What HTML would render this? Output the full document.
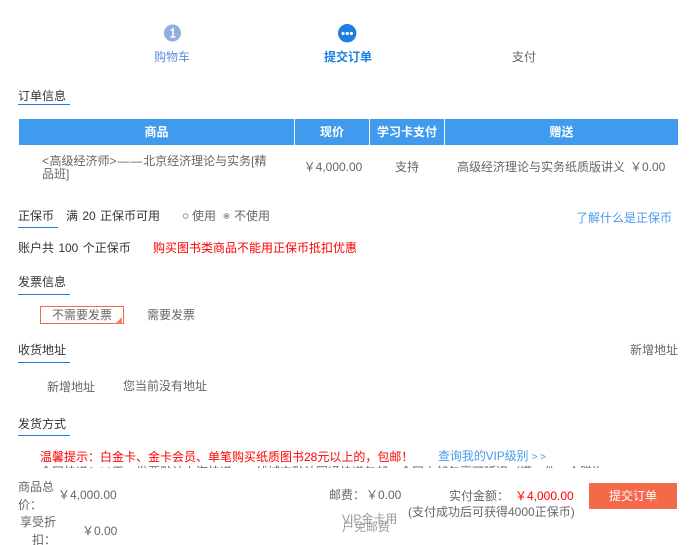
<!DOCTYPE html>
<html lang="zh-CN">
<head>
<meta charset="utf-8">
<title>提交订单</title>
<style>
html,body{margin:0;padding:0;background:#fff}
#p{position:relative;width:696px;height:545px;overflow:hidden;background:#fff;font-family:"Liberation Sans","WenQuanYi Zen Hei","Noto Sans CJK SC",sans-serif;font-size:12px;color:#666}
.t{position:absolute;white-space:nowrap;line-height:16px;height:16px}
.c{text-align:center}
.h{color:#333}
.u{position:absolute;height:1px;background:#1a7fe0}
.th{position:absolute;top:119px;height:26px;line-height:26px;background:#409bef;color:#fff;text-align:center;font-weight:bold;font-size:12px}
</style>
</head>
<body>
<div id="p">
<svg style="position:absolute;left:164px;top:24px" width="18" height="18" viewBox="0 0 18 18"><circle cx="8.5" cy="9" r="8.5" fill="#92aede"/><path d="M6.5 6.5 9 5v7.5M6.5 13h5" stroke="#fff" stroke-width="1.6" fill="none"/></svg>
<svg style="position:absolute;left:338px;top:24px" width="19" height="19" viewBox="0 0 19 19"><circle cx="9.2" cy="9.2" r="9.2" fill="#1a7fe0"/><circle cx="5" cy="9.5" r="1.6" fill="#fff"/><circle cx="9.2" cy="9.5" r="1.6" fill="#fff"/><circle cx="13.4" cy="9.5" r="1.6" fill="#fff"/></svg>
<div class="t c" style="left:132px;width:80px;top:49px;color:#5b8fdc">购物车</div>
<div class="t c" style="left:308px;width:80px;top:49px;color:#1a7fe0;font-weight:bold">提交订单</div>
<div class="t c" style="left:484px;width:80px;top:49px;color:#666">支付</div>

<div class="t h" style="left:18px;top:88px">订单信息</div>
<div class="u" style="left:18px;top:104px;width:52px"></div>

<div class="th" style="left:19px;width:275px">商品</div>
<div class="th" style="left:295px;width:74px">现价</div>
<div class="th" style="left:370px;width:74px">学习卡支付</div>
<div class="th" style="left:445px;width:233px">赠送</div>

<div class="t" style="left:42px;top:153px"><span style="letter-spacing:.5px">&lt;</span>高级经济师<span style="letter-spacing:1px">&gt;</span><span style="letter-spacing:.8px">——</span>北京经济理论与实务[精</div>
<div class="t" style="left:42px;top:166px">品班]</div>
<div class="t c" style="left:295px;width:76px;top:159px">￥4,000.00</div>
<div class="t c" style="left:370px;width:74px;top:159px">支持</div>
<div class="t" style="left:457px;top:159px">高级经济理论与实务纸质版讲义</div>
<div class="t" style="left:630px;top:159px">￥0.00</div>

<div class="t h" style="left:18px;top:208px">正保币</div>
<div class="u" style="left:18px;top:227px;width:40px"></div>
<div class="t h" style="left:66px;top:208px;word-spacing:1px">满 20 正保币可用</div>
<svg style="position:absolute;left:181px;top:211px" width="10" height="10" viewBox="0 0 10 10"><circle cx="4.5" cy="5" r="2.3" fill="#fff" stroke="#999"/></svg>
<div class="t" style="left:192px;top:208px">使用</div>
<svg style="position:absolute;left:222px;top:211px" width="10" height="10" viewBox="0 0 10 10"><circle cx="4.5" cy="5" r="2.5" fill="#fff" stroke="#999"/><circle cx="4.5" cy="5" r="1.3" fill="#777"/></svg>
<div class="t" style="left:234px;top:208px">不使用</div>
<div class="t" style="left:576px;top:210px;color:#4a9be8">了解什么是正保币</div>

<div class="t h" style="left:18px;top:240px;word-spacing:1px">账户共 100 个正保币</div>
<div class="t" style="left:153px;top:240px;color:#f00">购买图书类商品不能用正保币抵扣优惠</div>

<div class="t h" style="left:18px;top:274px">发票信息</div>
<div class="u" style="left:18px;top:294px;width:52px"></div>
<div style="position:absolute;left:40px;top:306px;width:82px;height:16px;border:1px solid #f4694b"></div>
<svg style="position:absolute;left:115px;top:317px" width="8" height="7"><path d="M7 0V7H0Z" fill="#f5806a"/></svg>
<div class="t" style="left:52px;top:307px">不需要发票</div>
<div class="t" style="left:147px;top:307px">需要发票</div>

<div class="t h" style="left:18px;top:342px">收货地址</div>
<div class="u" style="left:18px;top:362px;width:52px"></div>
<div class="t" style="left:630px;top:342px">新增地址</div>
<div class="t" style="left:47px;top:379px">新增地址</div>
<div class="t" style="left:123px;top:378px">您当前没有地址</div>

<div class="t h" style="left:18px;top:416px">发货方式</div>
<div class="u" style="left:18px;top:435px;width:52px"></div>

<div class="t" style="left:40px;top:449px;color:#f00">温馨提示：白金卡、金卡会员、单笔购买纸质图书28元以上的，包邮！</div>
<div class="t" style="left:438px;top:448px;color:#4a9be8;letter-spacing:-.1px">查询我的VIP级别 <span style="font-size:10px">&gt; &gt;</span></div>
<div style="position:absolute;left:40px;top:464px;width:560px;height:4px;overflow:hidden"><div class="t" style="left:0;top:0">全国快递8-10天；发票默认上海快递，一线城市默认圆通快递包邮，全国人邮包裹可延迟（满一件一个赠送）</div></div>

<div class="t" style="left:18px;top:479px">商品总</div>
<div class="t" style="left:18px;top:497px">价：</div>
<div class="t" style="left:58px;top:487px">￥4,000.00</div>
<div class="t" style="left:20px;top:514px">享受折</div>
<div class="t" style="left:32px;top:532px">扣：</div>
<div class="t" style="left:82px;top:523px">￥0.00</div>

<div class="t" style="left:329px;top:487px">邮费：</div>
<div class="t" style="left:366px;top:487px">￥0.00</div>
<div class="t" style="left:342px;top:511px;color:#999">VIP金卡用</div>
<div class="t" style="left:342px;top:519px;color:#999">户免邮费</div>

<div class="t" style="left:449px;top:488px">实付金额：</div>
<div class="t" style="left:515px;top:488px;color:#f00">￥4,000.00</div>
<div class="t" style="left:408px;top:504px">(支付成功后可获得4000正保币)</div>

<div style="position:absolute;left:589px;top:483px;width:88px;height:26px;line-height:26px;background:#f5694b;color:#fff;text-align:center;font-size:12px">提交订单</div>
</div>
</body>
</html>
